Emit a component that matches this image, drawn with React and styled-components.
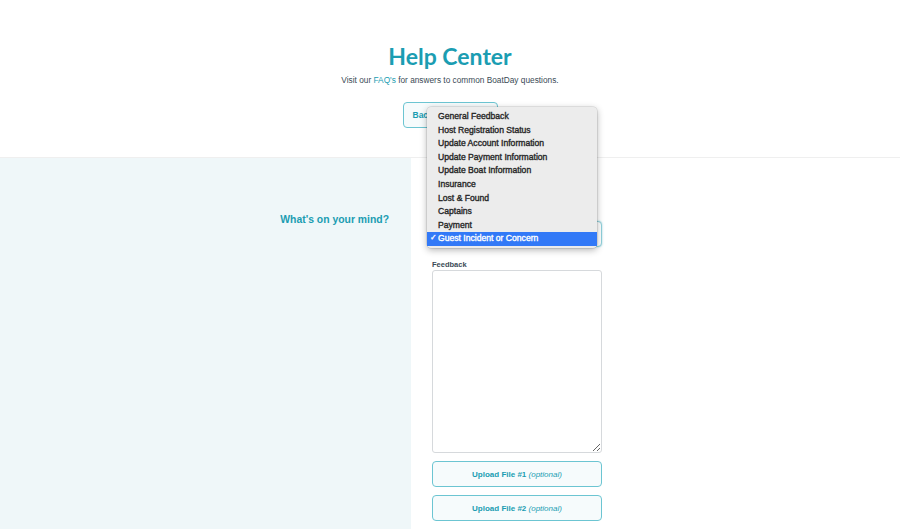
import React from "react";
import styled, { createGlobalStyle } from "styled-components";

const GlobalStyle = createGlobalStyle`
  body {
    margin: 0;
    font-family: "Liberation Sans", Arial, sans-serif;
    background: #fff;
  }
`;

const Header = styled.header`
  padding: 42px 0 29px;
  text-align: center;
`;

const Title = styled.h1`
  margin: 0;
  font-family: Lato, "Liberation Sans", sans-serif;
  font-size: 23px;
  line-height: 28px;
  font-weight: 700;
  color: #1b9db2;
`;

const Subtitle = styled.p`
  margin: 4px 0 0;
  font-size: 8.3px;
  line-height: 12px;
  color: #3a4a55;
`;

const Link = styled.a`
  color: #1b9db2;
  text-decoration: none;
`;

const BackButton = styled.button`
  margin-top: 16px;
  width: 95px;
  height: 26px;
  padding: 0 0 0 9px;
  text-align: left;
  border: 1px solid #6cc5d2;
  border-radius: 4px;
  background: #f6fbfc;
  color: #1b9db2;
  font-family: inherit;
  font-size: 8.5px;
  font-weight: 700;
`;

const Main = styled.main`
  display: grid;
  grid-template-columns: 411px 1fr;
  border-top: 1px solid #efefef;
  min-height: 380px;
`;

const Side = styled.div`
  background: #eff7f9;
  padding: 55px 22px 0 0;
  text-align: right;
`;

const Question = styled.h2`
  margin: 0;
  font-size: 10.4px;
  line-height: 14px;
  font-weight: 700;
  color: #1b9db2;
`;

const Form = styled.div`
  padding: 63px 0 0 21px;
  width: 170px;
`;

const SelectWrap = styled.div`
  position: relative;
  height: 26px;
`;

const SelectBox = styled.div`
  box-sizing: border-box;
  height: 26px;
  border: 1px solid #8fd0db;
  border-radius: 4px;
  box-shadow: 0 0 2px #9ad6e0;
  background: #fff;
`;

const Menu = styled.ul`
  position: absolute;
  left: -5px;
  top: -114px;
  width: 170px;
  margin: 0;
  padding: 3px 0 2px;
  box-sizing: border-box;
  list-style: none;
  background: #ececec;
  border-radius: 4px;
  box-shadow: 0 2px 7px rgba(0, 0, 0, 0.3), 0 0 0 0.5px rgba(0, 0, 0, 0.15);
`;

const Item = styled.li`
  position: relative;
  height: 13.6px;
  line-height: 13.6px;
  padding-left: 11px;
  font-size: 8.6px;
  font-weight: 400;
  -webkit-text-stroke: 0.35px currentColor;
  color: ${(p) => (p.$selected ? "#fff" : "#262626")};
  background: ${(p) => (p.$selected ? "#3279f7" : "transparent")};
`;

const Check = styled.span`
  position: absolute;
  left: 3px;
  top: -1px;
  font-size: 8px;
`;

const Label = styled.label`
  display: block;
  margin-top: 13px;
  font-size: 7.5px;
  line-height: 10px;
  font-weight: 700;
  color: #3a4a55;
`;

const TextArea = styled.textarea`
  display: block;
  box-sizing: border-box;
  width: 170px;
  height: 183px;
  margin: 0;
  border: 1px solid #d6d9dc;
  border-radius: 3px;
  resize: vertical;
`;

const UploadButton = styled.button`
  display: block;
  box-sizing: border-box;
  width: 170px;
  height: 26px;
  margin-top: 8px;
  border: 1px solid #6cc5d2;
  border-radius: 4px;
  background: #f6fbfc;
  color: #1b9db2;
  font-family: inherit;
  font-size: 8px;
  font-weight: 700;

  em {
    font-weight: 400;
  }
`;

const options = [
  "General Feedback",
  "Host Registration Status",
  "Update Account Information",
  "Update Payment Information",
  "Update Boat Information",
  "Insurance",
  "Lost & Found",
  "Captains",
  "Payment",
  "Guest Incident or Concern",
];

export default function App() {
  const selected = "Guest Incident or Concern";
  return (
    <>
      <GlobalStyle />
      <Header>
        <Title>Help Center</Title>
        <Subtitle>
          Visit our <Link href="#">FAQ's</Link> for answers to common BoatDay questions.
        </Subtitle>
        <BackButton>Back to FAQ's</BackButton>
      </Header>
      <Main>
        <Side>
          <Question>What's on your mind?</Question>
        </Side>
        <Form>
          <SelectWrap>
            <SelectBox />
            <Menu>
              {options.map((o) => (
                <Item key={o} $selected={o === selected}>
                  {o === selected && <Check>✓</Check>}
                  {o}
                </Item>
              ))}
            </Menu>
          </SelectWrap>
          <Label>Feedback</Label>
          <TextArea />
          <UploadButton>
            Upload File #1 <em>(optional)</em>
          </UploadButton>
          <UploadButton>
            Upload File #2 <em>(optional)</em>
          </UploadButton>
        </Form>
      </Main>
    </>
  );
}
